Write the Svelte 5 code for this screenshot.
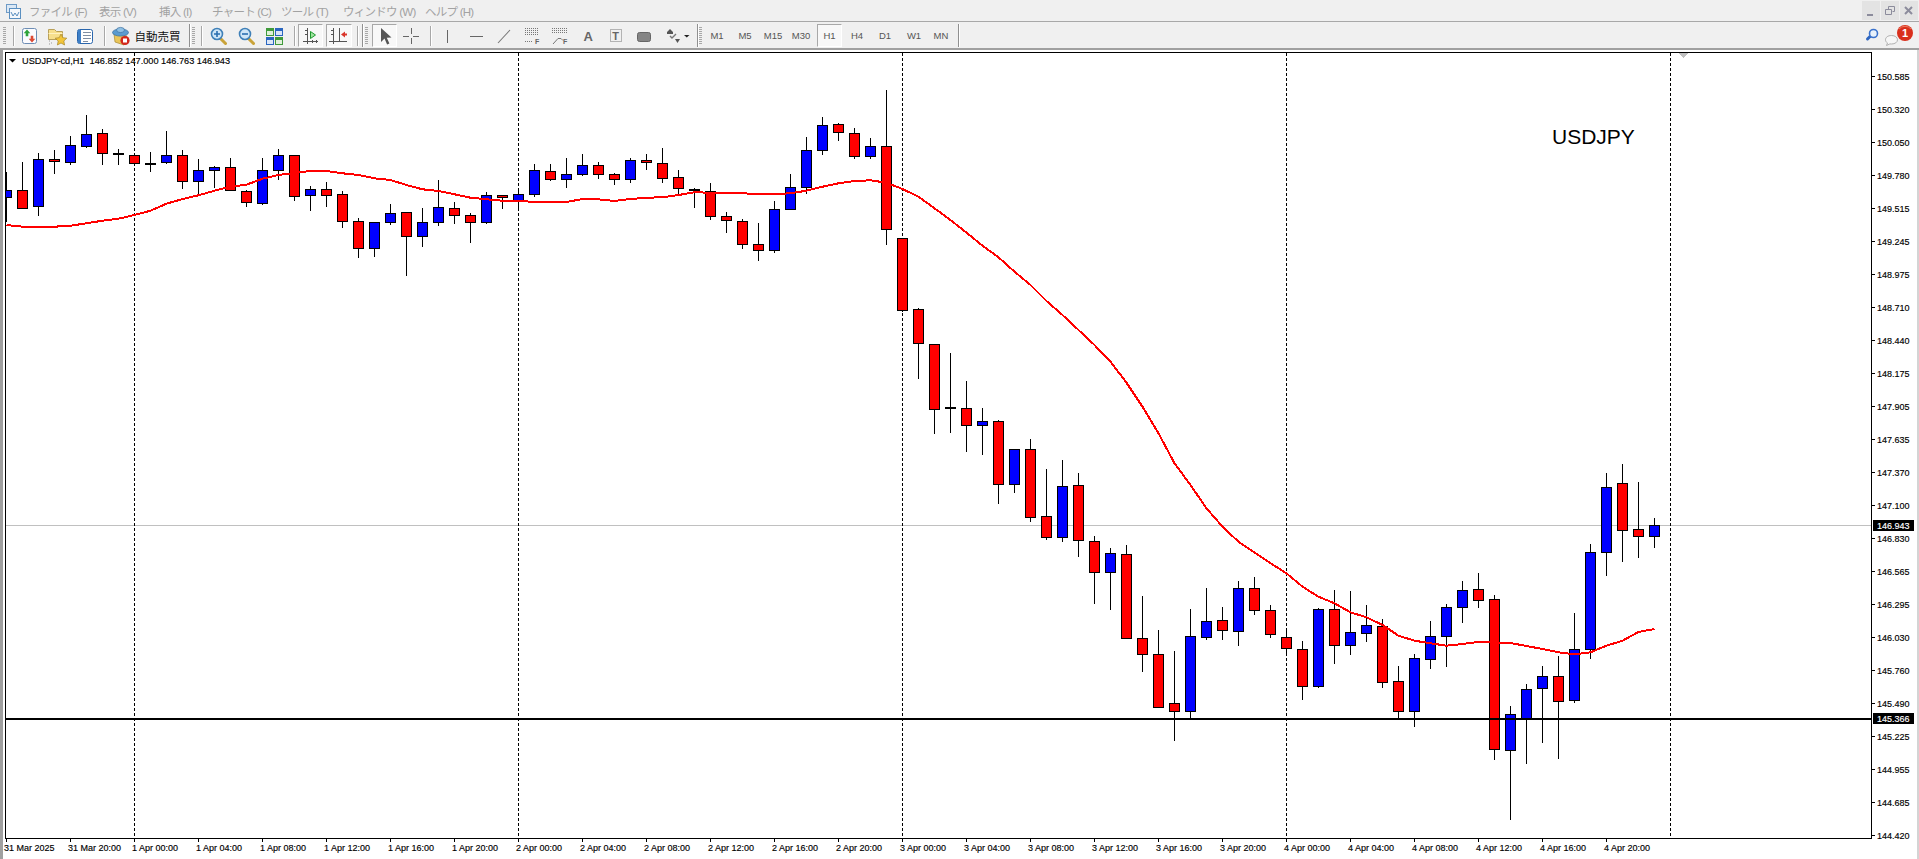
<script>
  const menu = [
    { t: 'ファイル (F)', x: 29, w: 50 },
    { t: '表示 (V)', x: 99, w: 40 },
    { t: '挿入 (I)', x: 159, w: 33 },
    { t: 'チャート (C)', x: 212, w: 49 },
    { t: 'ツール (T)', x: 281, w: 42 },
    { t: 'ウィンドウ (W)', x: 343, w: 62 },
    { t: 'ヘルプ (H)', x: 425, w: 47 }
  ];
  let mEnd = 20;
  const menuItems = menu.map((m) => {
    const gap = m.x - mEnd;
    mEnd = m.x + m.w;
    return { ...m, gap };
  });

  const raw = [
    { id: 'grip', x: 3, w: 3 }, { id: 'sep', x: 12, w: 2 },
    { id: 'new', x: 22, w: 15 }, { id: 'folder', x: 48, w: 19 }, { id: 'list', x: 77, w: 17 },
    { id: 'sep', x: 103, w: 2 }, { id: 'auto', x: 112, w: 18 }, { id: 'autotext', x: 134, w: 47 },
    { id: 'band', x: 188, w: 2 }, { id: 'grip', x: 192, w: 3 }, { id: 'sep', x: 200, w: 2 },
    { id: 'zin', x: 210, w: 17 }, { id: 'zout', x: 238, w: 17 }, { id: 'tile', x: 266, w: 17 },
    { id: 'sep', x: 293, w: 2 }, { id: 'shift', x: 298, w: 25 }, { id: 'scroll', x: 326, w: 26 },
    { id: 'sep', x: 356, w: 2 }, { id: 'band', x: 361, w: 2 }, { id: 'grip', x: 365, w: 3 },
    { id: 'cursor', x: 372, w: 25 }, { id: 'cross', x: 403, w: 16 }, { id: 'sep', x: 429, w: 2 },
    { id: 'vline', x: 444, w: 6 }, { id: 'hline', x: 469, w: 15 }, { id: 'diag', x: 497, w: 14 },
    { id: 'hfib', x: 525, w: 15 }, { id: 'fan', x: 552, w: 16 }, { id: 'atext', x: 582, w: 12 },
    { id: 'tbox', x: 609, w: 14 }, { id: 'rect', x: 637, w: 14 }, { id: 'arrows', x: 666, w: 24 },
    { id: 'band', x: 696, w: 2 }, { id: 'grip', x: 699, w: 3 },
    { id: 'tf', t: 'M1', x: 703, w: 28 }, { id: 'tf', t: 'M5', x: 731, w: 28 },
    { id: 'tf', t: 'M15', x: 759, w: 28 }, { id: 'tf', t: 'M30', x: 787, w: 28 },
    { id: 'tf', t: 'H1', x: 817, w: 25, on: true }, { id: 'tf', t: 'H4', x: 843, w: 28 },
    { id: 'tf', t: 'D1', x: 871, w: 28 }, { id: 'tf', t: 'W1', x: 900, w: 28 },
    { id: 'tf', t: 'MN', x: 927, w: 28 }, { id: 'band', x: 957, w: 2 },
    { id: 'right', x: 1862, w: 54 }
  ];
  let tEnd = 0;
  const tools = raw.map((it) => {
    const gap = it.x - tEnd;
    tEnd = it.x + it.w;
    return { ...it, gap };
  });

  // high, low, body top, body bottom, blue?
  const bars = [
    [172.7,221.7,190,197.7,1],[162,208,190.3,208.3,0],[153.3,215.7,159.3,206.7,1],[150,173.7,159.3,161.7,0],
    [136,164.7,145.3,162.3,1],[115,147.7,134.3,146.3,1],[129,164.7,133.3,153.3,0],[149.3,164.7,153.7,153.7,0],
    [155.3,163.3,155.3,163.3,0],[152,171.7,163.7,163.7,0],[131,163.3,155.3,162.3,1],[150.3,188.7,155.3,181.3,0],
    [159.3,194.3,170.3,181.3,1],[166.3,187.3,167.3,170.3,1],[158.3,190.3,167.3,190.3,0],[190.3,206.7,191.3,202.3,0],
    [158.3,204.7,170.3,203.3,1],[149.3,179.3,155.3,170.3,1],[155.3,200.7,155.3,196.3,0],[186.3,210.7,189.3,195.7,1],
    [182.3,206.7,189.3,195.7,0],[191.3,227.7,194.3,221.3,0],[218.3,257.7,221.3,248.3,0],[222.3,256.7,222.3,248.3,1],
    [204.3,224.3,213.3,222.3,1],[212.3,275.7,212.3,236.3,0],[208,246.7,222.3,236.3,1],[180,225.7,207.3,222.3,1],
    [202.3,223.7,208.3,215.3,0],[213.3,242.7,215.3,222.3,0],[192.3,223.7,195.3,222.3,1],[195.3,208.7,195.3,197.3,0],
    [190.3,210.7,194.3,200.3,1],[164.3,196.7,170.3,194.3,1],[164.3,180.3,171.3,179.3,0],[158.3,187.7,174.3,179.3,1],
    [154.3,175.7,165.3,174.3,1],[162.3,178.7,165.3,174.3,0],[173.3,184.7,174.3,179.3,0],[158.3,182.3,160.3,179.3,1],
    [154.3,169.7,160.3,162.3,0],[148.3,182.3,163.3,178.3,0],[170.3,194.3,177.3,188.3,0],[188.3,207.7,189.7,189.7,0],
    [183.3,219.3,191.3,216.3,0],[212.3,232.7,216.3,220.3,0],[219.3,248.3,221.3,244.3,0],[223.3,260,244.3,250.3,0],
    [201.3,252.3,209.3,250.3,1],[174.3,209.3,187.3,209.3,1],[137.3,193.3,150.3,187.3,1],[117.3,154.3,125.3,150.3,1],
    [123.3,140.7,124.3,132.3,0],[128.3,158.3,133.3,156.3,0],[138.3,158.3,146.3,156.3,1],[90,244.3,146.3,229.3,0],
    [238.3,311,238.3,310.3,0],[308.3,378.7,309.3,343.3,0],[344.3,433.7,344.3,409.3,0],[353.3,432.7,407.7,407.7,0],
    [381.3,451.7,408.3,425.3,0],[408.3,454.7,421.3,425.3,1],[420.3,503.7,421.3,484.3,0],[449.3,492.7,449.3,484.3,1],
    [439.3,521.7,449.3,517.3,0],[469.3,539.3,516.3,537.3,0],[460.3,541.3,486.3,537.3,1],[473.3,556.3,485.3,540.3,0],
    [536.3,603.3,541.7,572.7,0],[548.3,609,553.3,572.3,1],[545.3,638.3,554.3,638.3,0],[596.3,671.7,638.3,654.3,0],
    [630.3,707.3,654.3,707.3,0],[651.3,740.3,703.3,711.3,0],[609.3,718.3,636.3,711.3,1],[588.3,639.3,621.3,637.3,1],
    [607.3,639.7,620.3,630.3,0],[581.3,645.7,588.3,631.3,1],[577.3,614.7,588.3,610.3,0],[605.3,637.3,610.3,634.3,0],
    [628.3,654.7,637.3,648.3,0],[641.3,699.7,649.3,686.3,0],[608.3,687.3,609.3,686.3,1],[590.3,663.3,609.3,645.3,0],
    [591.3,654.3,632.3,645.3,1],[605.3,641.3,625.3,633.3,1],[619.3,687.3,626.3,682.3,0],[666.3,718.3,681.3,711.3,0],
    [654.3,726.3,658.3,711.3,1],[621.3,668.3,636.3,659.3,1],[604.3,666.3,607.3,636.3,1],[581.3,622.7,590.3,607.3,1],
    [573.3,607.7,589.3,600.3,0],[595.3,759.3,599.3,749.3,0],[706.3,819.7,714.3,750.3,1],[684.3,763.7,689.3,718.3,1],
    [666.3,742.7,676.3,688.3,1],[656.3,758.7,676.3,701.3,0],[613.3,702.3,649.3,700.3,1],[544.3,658.7,552.3,649.3,1],
    [473.3,575.3,487.3,552.3,1],[464.3,561.7,483.3,530.3,0],[482.3,557.7,529.3,536.3,0],[518.3,547.7,525.3,536.3,1]
  ].map((b, k) => {
    const f = Math.floor;
    const cx = 6 + 16 * k;
    return { cx, hi: f(b[0]), lo: f(b[1]), top: f(b[2]), h: Math.max(1, f(b[3]) - f(b[2])), blue: !!b[4] };
  });

  const maY = [
    225,226.7,227,226.7,225.7,223.3,220.7,218.7,215,210.7,203.7,199,195.3,190.7,186.7,184.7,178.7,175,173,171,171,173.3,175,178.3,180,185,189.3,191,194.3,197.7,
    199.3,200.7,200.7,202,202,202,199,199.3,201,199,197.7,197.3,195,192.3,192.7,192.7,193.3,194,194,193.3,190.7,186.7,183.3,181,180.3,182.7,189,196.7,208.3,220,
    232.7,245.7,257.3,271.7,285,301,315,330,345,361.7,382.7,406.7,433.3,463.3,485,508.3,526.7,541.7,552.5,
    563.3,573.3,586.7,596.7,603.3,612.3,617.3,625,635.7,640.7,643.3,645.7,644,642,642.7,643,
    646,649,652.3,654.3,652.3,645.7,640.7,632,629
  ];
  const maPts = maY.map((y, k) => `${6.5 + 16 * k},${y}`).join(' ');

  const prices = ['150.585','150.320','150.050','149.780','149.515','149.245','148.975','148.710','148.440','148.175','147.905','147.635','147.370','147.100','146.830','146.565','146.295','146.030','145.760','145.490','145.225','144.955','144.685','144.420'];
  const days = ['1 Apr', '2 Apr', '3 Apr', '4 Apr'];
  const times = ['31 Mar 2025', '31 Mar 20:00'];
  for (const d of days) for (const h of ['00','04','08','12','16','20']) times.push(`${d} ${h}:00`);
  const vgrid = [134, 518, 902, 1286, 1670];
</script>

<div class="page">
  <header class="menubar">
    <svg class="appicon" width="15" height="15" viewBox="0 0 15 15">
      <rect x="0.5" y="0.5" width="10" height="8" fill="#dbe8f5" stroke="#6f9bc6" />
      <rect x="3.5" y="4.5" width="11" height="10" fill="#f4f8fc" stroke="#5a8fc0" />
      <path d="M5 8 l2 4 l2 -3 l2 3 l2 -4" fill="none" stroke="#5a8fc0" />
    </svg>
    {#each menuItems as m}
      <span class="menuitem" style="margin-left:{m.gap}px;width:{m.w}px">{m.t}</span>
    {/each}
    <div class="winbtns">
      <span class="winbtn"><svg width="18" height="19" viewBox="0 0 18 19"><rect x="5" y="13" width="6" height="2" fill="#8c8c9c" /></svg></span>
      <span class="winbtn"><svg width="18" height="19" viewBox="0 0 18 19"><path d="M7.5 5.5h6v5h-2M4.5 8.5h6v5h-6z M7.5 5.5v3" fill="none" stroke="#8c8c9c" /></svg></span>
      <span class="winbtn"><svg width="18" height="19" viewBox="0 0 18 19"><path d="M5 6l7 7M12 6l-7 7" stroke="#8c8c9c" stroke-width="2" /></svg></span>
    </div>
  </header>

  <div class="toolbar">
    {#each tools as t}
      <div class="cell" class:pressed={t.on || t.id === 'shift' || t.id === 'scroll' || t.id === 'cursor'} style="margin-left:{t.gap}px;width:{t.w}px">
        {#if t.id === 'grip'}
          <span class="grip"></span>
        {:else if t.id === 'sep'}
          <span class="sep"></span>
        {:else if t.id === 'band'}
          <span class="band"></span>
        {:else if t.id === 'autotext'}
          <span class="autotext">自動売買</span>
        {:else if t.id === 'tf'}
          <span class="tf">{t.t}</span>
        {:else if t.id === 'new'}
          <svg width="15" height="23" viewBox="0 0 15 23">
            <rect x="0.5" y="4.5" width="14" height="15" rx="2" fill="#fbfbff" stroke="#6d8db5" />
            <path d="M5 5.5l3.3 3.700h-2v3h-2.600v-3h-2z" fill="#2fa33a" />
            <path d="M10 18.500l-3.300-3.700h2v-3h2.600v3h2z" fill="#dd4a35" />
          </svg>
        {:else if t.id === 'folder'}
          <svg width="19" height="23" viewBox="0 0 19 23">
            <path d="M0.5 5.5h6l2 2h6v8h-14z" fill="#f7df8c" stroke="#b8a05a" />
            <path d="M0.5 9.5h14" stroke="#fff2c0" />
            <path d="M13 10l1.800 3.700 4 .5-3 2.800.8 4-3.600-2-3.600 2 .8-4-3-2.800 4-.5z" fill="#f2c53a" stroke="#a8862a" stroke-width="0.7" />
            <path d="M1 17h1M3 19h1M1 20h1" stroke="#999" />
          </svg>
        {:else if t.id === 'list'}
          <svg width="17" height="23" viewBox="0 0 17 23">
            <rect x="0.5" y="5.5" width="15" height="14" rx="2" fill="#fff" stroke="#2a66ad" />
            <rect x="1" y="6" width="3" height="13" fill="#3d7fc7" />
            <path d="M6 8.5h8M6 11.5h8M6 14.5h8M6 17.5h5" stroke="#7f8ea3" />
          </svg>
        {:else if t.id === 'auto'}
          <svg width="18" height="23" viewBox="0 0 18 23">
            <path d="M2 10 L3 18 L12 21 L15 12z" fill="#eac65a" stroke="#a88a30" stroke-width="0.7" />
            <ellipse cx="8.5" cy="8.5" rx="8" ry="3.600" fill="#5a9bd0" stroke="#3a6f9f" stroke-width="0.7" />
            <ellipse cx="8.5" cy="6" rx="4" ry="2.600" fill="#8fc0e4" stroke="#3a6f9f" stroke-width="0.7" />
            <circle cx="13" cy="16.500" r="4.600" fill="#d3271b" />
            <rect x="11" y="14.500" width="4" height="4" fill="#fff" />
          </svg>
        {:else if t.id === 'zin' || t.id === 'zout'}
          <svg width="17" height="23" viewBox="0 0 17 23">
            <path d="M10.5 14.5 L15.5 19.5" stroke="#c9a33a" stroke-width="3" stroke-linecap="round" />
            <circle cx="7" cy="10" r="5.5" fill="#cfe6f7" stroke="#3f80b8" stroke-width="1.6" />
            <path d={t.id === 'zin' ? 'M4 10h6M7 7v6' : 'M4 10h6'} stroke="#2a6fb0" stroke-width="1.6" />
          </svg>
        {:else if t.id === 'tile'}
          <svg width="17" height="23" viewBox="0 0 17 23">
            <rect x="0" y="4" width="8" height="8" fill="#3f9a3a" /><rect x="1" y="7" width="6" height="4" fill="#dff0da" />
            <rect x="9" y="4" width="8" height="8" fill="#2a66c0" /><rect x="10" y="7" width="6" height="4" fill="#dbe6f7" />
            <rect x="0" y="13" width="8" height="8" fill="#2a66c0" /><rect x="1" y="16" width="6" height="4" fill="#dbe6f7" />
            <rect x="9" y="13" width="8" height="8" fill="#3f9a3a" /><rect x="10" y="16" width="6" height="4" fill="#dff0da" />
          </svg>
        {:else if t.id === 'shift'}
          <svg width="23" height="21" viewBox="0 0 23 21">
            <path d="M8.5 3v16M4 16.5h15M6 5.5h2M6 9.5h2M13.5 15v3M17.5 15v3" stroke="#555" fill="none" />
            <path d="M11.5 6.5l5 3.500-5 3.500z" fill="#9fe39f" stroke="#1f9a2f" />
          </svg>
        {:else if t.id === 'scroll'}
          <svg width="24" height="21" viewBox="0 0 24 21">
            <path d="M6.5 3v16M2 16.5h18M12.5 3v13M4 5.5h2M4 9.5h2" stroke="#555" fill="none" />
            <path d="M14 9.5l4-3v2h2v2h-2v2z" fill="#d9352a" />
          </svg>
        {:else if t.id === 'cursor'}
          <svg width="23" height="21" viewBox="0 0 23 21">
            <path d="M8 3v14l3.500-3.400 2.600 6 2.300-1-2.600-5.800 4.700-.3z" fill="#555" />
          </svg>
        {:else if t.id === 'cross'}
          <svg width="16" height="23" viewBox="0 0 16 23">
            <path d="M8.5 4v6M8.5 14v6M0 12.5h6M10 12.5h6" stroke="#666" />
          </svg>
        {:else if t.id === 'vline'}
          <svg width="6" height="23" viewBox="0 0 6 23"><path d="M3.5 6v13" stroke="#666" /></svg>
        {:else if t.id === 'hline'}
          <svg width="15" height="23" viewBox="0 0 15 23"><path d="M1 12.5h13" stroke="#666" /></svg>
        {:else if t.id === 'diag'}
          <svg width="14" height="23" viewBox="0 0 14 23"><path d="M1 19L13 6" stroke="#777" stroke-width="1.1" /></svg>
        {:else if t.id === 'hfib'}
          <svg width="15" height="23" viewBox="0 0 15 23">
            <path d="M0 4.5h14M0 6.5h14M0 8.5h14M0 10.5h14M0 17.5h8" stroke="#777" stroke-dasharray="1 1" />
            <text x="10" y="20" class="tinyf">F</text>
          </svg>
        {:else if t.id === 'fan'}
          <svg width="16" height="23" viewBox="0 0 16 23">
            <path d="M0 4.5h15M0 6.5h15M0 8.5h15" stroke="#777" stroke-dasharray="1 1" />
            <path d="M1 20L6 14.5h3l2 2" fill="none" stroke="#777" />
            <text x="11" y="20" class="tinyf">F</text>
          </svg>
        {:else if t.id === 'atext'}
          <svg width="12" height="23" viewBox="0 0 12 23"><text x="1.5" y="17" class="bigA">A</text></svg>
        {:else if t.id === 'tbox'}
          <svg width="14" height="23" viewBox="0 0 14 23">
            <rect x="1.5" y="5.5" width="11" height="12" fill="none" stroke="#777" stroke-dasharray="1 1" />
            <text x="3.2" y="16" class="bigT">T</text>
          </svg>
        {:else if t.id === 'rect'}
          <svg width="14" height="23" viewBox="0 0 14 23">
            <rect x="0.5" y="8.5" width="13" height="9" rx="2" fill="#858585" stroke="#666" />
          </svg>
        {:else if t.id === 'arrows'}
          <svg width="24" height="23" viewBox="0 0 24 23">
            <path d="M4 5l3 3H1zM1 8h6v2H1z" fill="#555" />
            <path d="M4 12l2 2 4-4" fill="none" stroke="#777" stroke-width="1.4" />
            <path d="M9 15h5l-2.500 4z" fill="#555" />
            <path d="M18 11h5.500l-2.750 2.500z" fill="#222" />
          </svg>
        {:else if t.id === 'right'}
          <svg width="54" height="23" viewBox="0 0 54 23">
            <path d="M5.5 15L8 12.500" stroke="#2f66c0" stroke-width="3" stroke-linecap="round" />
            <circle cx="11.5" cy="9.5" r="4" fill="#e8f1fb" stroke="#3a72cc" stroke-width="1.6" />
            <path d="M29.5 11.5c-3.500 0-6 1.800-6 4.300 0 1.400.8 2.400 2 3.200l-1 2.500 3.400-1.600c.6.1 1 .1 1.600.1 3.500 0 6-1.800 6-4.200s-2.500-4.300-6-4.300z" fill="#f6f6f6" stroke="#b0b0b0" />
            <circle cx="43" cy="9" r="8" fill="#d92f1c" />
            <path d="M37 5a8 8 0 0 1 12 0" fill="none" stroke="#ef7a5e" stroke-width="1" />
            <text x="43" y="13" class="badge">1</text>
          </svg>
        {/if}
      </div>
    {/each}
  </div>

  <div class="main">
    <span class="lgutter"></span>
    <svg class="chart" width="1914" height="809" viewBox="3 50 1914 809">
      <defs>
        <clipPath id="plot"><rect x="6" y="53" width="1865" height="785" /></clipPath>
      </defs>
      <g class="crisp">
        <rect x="6" y="525" width="1865" height="1" fill="#c0c0c0" />
        {#each vgrid as x}
          <line x1={x + 0.5} x2={x + 0.5} y1="53" y2="838" stroke="#000" stroke-dasharray="3 2" />
        {/each}
        <path d="M1678 53h11l-5.500 5z" fill="#c0c0c0" />

        <g clip-path="url(#plot)">
          {#each bars as b}
            <line x1={b.cx + 0.5} x2={b.cx + 0.5} y1={b.hi} y2={b.lo + 1} stroke="#000" />
            <rect x={b.cx - 4.5} y={b.top + 0.5} width="10" height={b.h} fill={b.blue ? '#0000ff' : '#ff0000'} stroke="#000" />
          {/each}
          <polyline points={maPts} fill="none" stroke="#ff0000" stroke-width="2" />
          <rect x="6" y="718" width="1865" height="2" fill="#000" />
        </g>

        <rect x="5.500" y="52.500" width="1866" height="786" fill="none" stroke="#000" />
        {#each prices as p, i}
          <rect x="1871" y={76 + 33 * i} width="4" height="1" fill="#000" />
        {/each}
        {#each times as t, i}
          <rect x={6 + 64 * i} y="838" width="1" height="4" fill="#000" />
        {/each}
      </g>

      <path class="hdrtri" d="M9 59h7l-3.500 3.500z" />
      <text x="22" y="64" class="hdr" xml:space="preserve">USDJPY-cd,H1  146.852 147.000 146.763 146.943</text>
      <text x="1552" y="144" class="sym">USDJPY</text>

      {#each prices as p, i}
        <text x="1877" y={80 + 33 * i} class="axis">{p}</text>
      {/each}
      {#each times as t, i}
        <text x={4 + 64 * i} y="851" class="axis">{t}</text>
      {/each}

      <rect x="1873" y="520" width="41" height="11" fill="#000" />
      <text x="1877" y="529" class="axis inv">146.943</text>
      <rect x="1873" y="713" width="41" height="11" fill="#000" />
      <text x="1877" y="722" class="axis inv">145.366</text>
    </svg>
    <span class="rgutter"></span>
  </div>
</div>

<style>
  :global(body) { margin: 0; background: #fff; overflow: hidden; }
  .page { width: 1919px; height: 859px; display: flex; flex-direction: column; font-family: "Liberation Sans", "Noto Sans CJK JP", sans-serif; overflow: hidden; }
  .menubar { height: 20px; padding-top: 1px; background: #f0f0f0; border-bottom: 1px solid #a8a8a8; display: flex; align-items: center; position: relative; flex: none; }
  .appicon { margin-left: 6px; width: 15px; flex: none; margin-right: -1px; }
  .menuitem { color: #a2a2a2; font-size: 11.500px; letter-spacing: -0.75px; white-space: nowrap; flex: none; }
  .winbtns { position: absolute; right: 1px; top: 1px; display: flex; gap: 1px; }
  .winbtn { width: 18px; height: 19px; background: #e3e3e3; display: block; }
  .toolbar { padding-top: 2px; box-sizing: border-box; background: #f0f0f0; display: flex; align-items: flex-start; border-bottom: 2px solid #a0a0a0; height: 28px; flex: none; }
  .cell { height: 23px; flex: none; display: flex; align-items: center; justify-content: center; box-sizing: border-box; }
  .cell svg { display: block; flex: none; }
  .pressed { border: 1px solid; border-color: #a8a8a8 #fff #fff #a8a8a8; background: #f8f8f8; }
  .grip { width: 3px; height: 18px; background: repeating-linear-gradient(#a8a8a8 0 1px, #f0f0f0 1px 2px); }
  .sep { width: 1px; height: 20px; background: #a8a8a8; box-shadow: 1px 0 #fff; }
  .band { width: 1px; height: 23px; background: #909090; box-shadow: 1px 0 #fff; }
  .autotext { font-size: 11.500px; color: #111; white-space: nowrap; }
  .tf { font-size: 9.500px; color: #555; white-space: nowrap; }
  .main { flex: 1; display: flex; min-height: 0; }
  .lgutter { width: 3px; background: #a0a0a0; flex: none; }
  .rgutter { width: 2px; background: #d4d4d4; flex: none; }
  .chart { display: block; flex: none; background: #fff; }
  .crisp { shape-rendering: crispEdges; }
  .hdrtri { fill: #000; }
  .hdr { font-size: 9.200px; fill: #000; stroke: #000; stroke-width: 0.15px; white-space: pre; }
  .sym { font-size: 21px; fill: #000; }
  .axis { font-size: 9px; fill: #000; stroke: #000; stroke-width: 0.15px; }
  .inv { fill: #fff; stroke: #fff; }
  .tinyf { font-size: 7px; font-weight: bold; fill: #666; }
  .bigA { font-size: 13px; font-weight: bold; fill: #666; }
  .bigT { font-size: 11px; font-weight: bold; fill: #666; }
  .badge { font-size: 11px; font-weight: bold; fill: #fff; text-anchor: middle; }
</style>
